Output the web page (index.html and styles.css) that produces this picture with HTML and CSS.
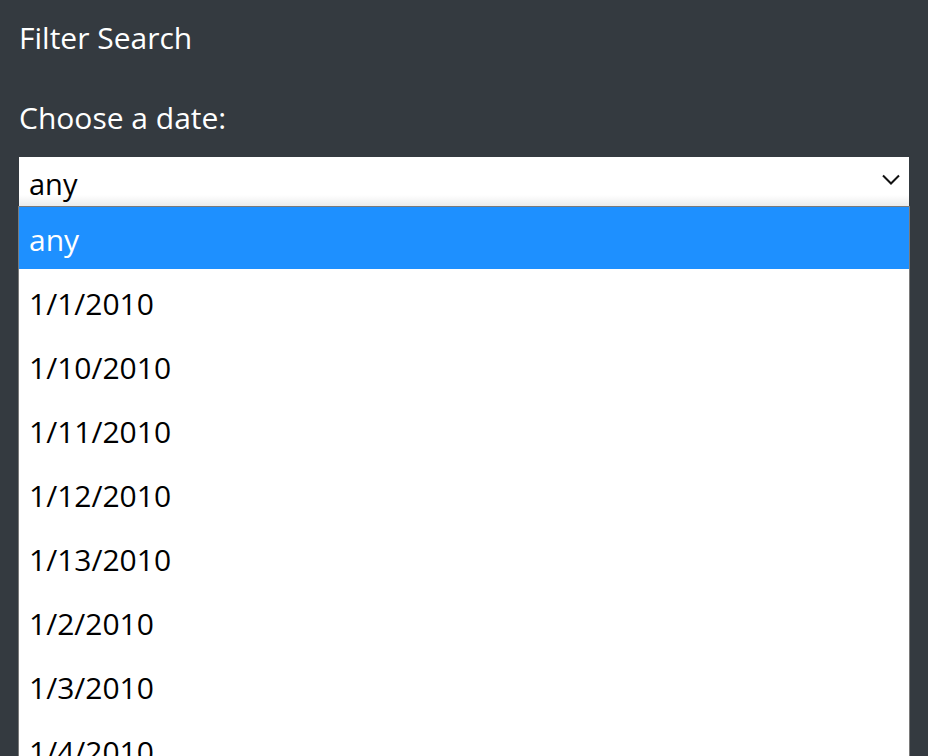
FILE: index.html
```html
<!DOCTYPE html>
<html lang="en">
<head>
<meta charset="utf-8">
<title>Filter Search</title>
<link rel="stylesheet" href="styles.css">
</head>
<body>
<div class="panel">
  <div class="title">Filter Search</div>
  <div class="label">Choose a date:</div>
  <div class="picker">
    <div class="select">
      <span class="value">any</span>
      <svg class="chevron" width="18" height="11" viewBox="0 0 18 11"><path d="M1 1.5 L9 9.5 L17 1.5" fill="none" stroke="#111" stroke-width="2"/></svg>
    </div>
    <div class="listbox">
      <div class="option selected">any</div>
      <div class="option">1/1/2010</div>
      <div class="option">1/10/2010</div>
      <div class="option">1/11/2010</div>
      <div class="option">1/12/2010</div>
      <div class="option">1/13/2010</div>
      <div class="option">1/2/2010</div>
      <div class="option">1/3/2010</div>
      <div class="option">1/4/2010</div>
    </div>
  </div>
</div>
</body>
</html>
```

FILE: styles.css
```css
html, body {
  margin: 0;
  padding: 0;
  height: 100%;
  overflow: hidden;
}
body {
  background: #343a40;
  font-family: "Open Sans", "Noto Sans", sans-serif;
  color: #ffffff;
}
.panel {
  padding: 18px 19px 0 19px;
}
.title {
  font-size: 30px;
  line-height: 40px;
}
.label {
  font-size: 30px;
  line-height: 40px;
  margin-top: 40px;
}
.picker {
  margin-top: 19px;
  width: 890px;
}
.select {
  height: 49px;
  background: linear-gradient(#ffffff 0, #ffffff 38px, #ececec 49px);
  color: #000;
  display: flex;
  align-items: center;
  justify-content: space-between;
  padding: 0 9px 0 10px;
  box-sizing: border-box;
  font-size: 29px;
}
.value {
  line-height: 49px;
  margin-top: 3px;
}
.chevron {
  display: block;
  margin-top: -4px;
}
.listbox {
  background: #ffffff;
  border: 1px solid #7a7a7a;
  margin-left: -1px;
  width: 890px;
}
.option {
  height: 64px;
  box-sizing: border-box;
  padding: 5px 0 0 10px;
  line-height: 59px;
  font-size: 30px;
  color: #000;
}
.option.selected {
  background: #1e90ff;
  color: #ffffff;
  height: 62px;
  padding-top: 3px;
  line-height: 59px;
}
```
